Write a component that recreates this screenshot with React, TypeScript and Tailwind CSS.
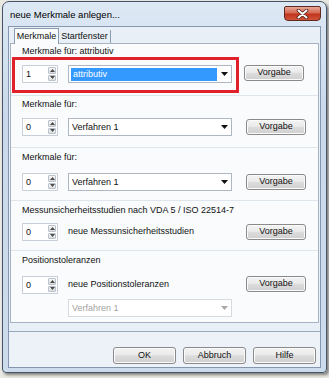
import React from 'react';

// Win7 style "neue Merkmale anlegen..." dialog

const UpArrow = ({ color = '#4a4a4a' }: { color?: string }) => (
  <svg width="5" height="3" viewBox="0 0 5 3">
    <path d="M0 3 L2.5 0 L5 3 Z" fill={color} />
  </svg>
);

const DownArrow = ({ color = '#1a1a1a', w = 7, h = 4 }: { color?: string; w?: number; h?: number }) => (
  <svg width={w} height={h} viewBox="0 0 7 4">
    <path d="M0 0 L7 0 L3.5 4 Z" fill={color} />
  </svg>
);

const Spinner = ({ value }: { value: string }) => (
  <div className="flex h-[18px] w-[36px] border border-[#c8cfd8] bg-white">
    <div className="flex-1 pl-[3px] leading-[16px]">{value}</div>
    <div className="flex w-[9px] flex-col gap-[1px] py-[1px] pr-[1px]">
      <div className="flex flex-1 items-center justify-center rounded-[1px] border border-[#b9c2cc] bg-[linear-gradient(#f7f7f7,#dedede)]">
        <UpArrow />
      </div>
      <div className="flex flex-1 items-center justify-center rounded-[1px] border border-[#b9c2cc] bg-[linear-gradient(#f7f7f7,#dedede)]">
        <DownArrow color="#4a4a4a" w={5} h={3} />
      </div>
    </div>
  </div>
);

const Combo = ({ text, selected, disabled }: { text: string; selected?: boolean; disabled?: boolean }) => (
  <div
    className={
      disabled
        ? 'flex h-[18px] w-[164px] items-center border border-[#d6dbe1] bg-white text-[#a3a3a3]'
        : 'flex h-[18px] w-[164px] items-center border border-[#aeb7c2] bg-white'
    }
  >
    {selected ? (
      <div className="ml-[2px] h-[13px] flex-1 bg-[#3399ff] pl-[2px] leading-[13px] text-white">{text}</div>
    ) : (
      <div className="flex-1 pl-[3px] leading-[16px]">{text}</div>
    )}
    <div className="flex w-[14px] justify-center">
      <DownArrow color={disabled ? '#a9a9a9' : '#111111'} w={7} h={4} />
    </div>
  </div>
);

const Btn = ({ children }: { children: React.ReactNode }) => (
  <div className="flex h-[16px] w-[60px] items-center justify-center rounded-[3px] border border-[#8a8a8a] bg-[linear-gradient(#f3f3f3,#ebebeb_45%,#dcdcdc_52%,#cfcfcf)] shadow-[inset_0_0_0_1px_#fbfbfb]">
    {children}
  </div>
);

const BigBtn = ({ children }: { children: React.ReactNode }) => (
  <div className="flex h-[17px] w-[63px] items-center justify-center rounded-[3px] border border-[#8a8a8a] bg-[linear-gradient(#f3f3f3,#ebebeb_45%,#dcdcdc_52%,#cfcfcf)] shadow-[inset_0_0_0_1px_#fbfbfb]">
    {children}
  </div>
);

function App() {
  return (
    <div className="h-[378px] w-[329px] overflow-hidden bg-[#e9e8e2] font-['Liberation_Sans',Arial,sans-serif] text-[9px] text-[#111111]">
      <div className="ml-[2px] mt-[1px] flex h-[372px] w-[325px] flex-col rounded-t-[7px] rounded-b-[4px] border border-[#46546a] bg-[linear-gradient(#dde8f4,#c9d9eb_30%,#cddcec)] shadow-[2px_2px_3px_rgba(0,0,0,0.45)]">
        {/* title bar */}
        <div className="flex h-[24px] shrink-0 items-start">
          <span className="ml-[7px] mt-[7px] text-[9.5px] leading-[12px] text-black">neue Merkmale anlegen...</span>
          <div className="ml-auto mr-[5px] mt-[4px] flex h-[15px] w-[37px] items-center justify-center rounded-b-[4px] rounded-t-[2px] border border-[#5e2a22] bg-[linear-gradient(#e9a797,#d56a50_45%,#c2341d_55%,#d0553a)]">
            <svg width="13" height="10" viewBox="0 0 13 10">
              <path d="M2.5 1.5 L10.5 8.5 M10.5 1.5 L2.5 8.5" stroke="#4a1f17" strokeWidth="3.6" strokeLinecap="round" />
              <path d="M2.5 1.5 L10.5 8.5 M10.5 1.5 L2.5 8.5" stroke="#ffffff" strokeWidth="2" strokeLinecap="round" />
            </svg>
          </div>
        </div>

        {/* client area */}
        <div className="mx-[5px] mb-[4px] flex flex-1 flex-col border border-[#8497ae] bg-[#e8eff7]">
          {/* tabs */}
          <div className="flex h-[16px] shrink-0 items-end pl-[5px]">
            <div className="relative top-[1px] z-10 flex h-[16px] w-[45px] items-center justify-center border border-b-0 border-[#8c9bb0] bg-[#f9fbfd]">
              Merkmale
            </div>
            <div className="flex h-[13px] w-[52px] items-center justify-center border-r border-[#8c9bb0]">Startfenster</div>
          </div>

          {/* tab page */}
          <div className="mx-[1px] flex h-[280px] shrink-0 flex-col border border-[#a6b3c3] bg-[#f9fbfd]">
            {/* section 1 */}
            <div className="h-[52px] shrink-0 border-b border-[#dfe5ec] pt-[1px]">
              <div className="pl-[11px] leading-[12px]">Merkmale für: attributiv</div>
              <div className="flex items-start pl-[1px]">
                <div className="flex h-[36px] w-[227px] items-start gap-[10px] border-[3px] border-[#e0202b] pl-[7px] pt-[5px]">
                  <Spinner value="1" />
                  <Combo text="attributiv" selected />
                </div>
                <div className="ml-[5px] mt-[8px]">
                  <Btn>Vorgabe</Btn>
                </div>
              </div>
            </div>

            {/* section 2 */}
            <div className="h-[52px] shrink-0 border-b border-[#dfe5ec] pt-[2px]">
              <div className="pl-[11px] leading-[12px]">Merkmale für:</div>
              <div className="mt-[8px] flex items-center pl-[11px]">
                <Spinner value="0" />
                <div className="ml-[10px]">
                  <Combo text="Verfahren 1" />
                </div>
                <div className="ml-[14px]">
                  <Btn>Vorgabe</Btn>
                </div>
              </div>
            </div>

            {/* section 3 */}
            <div className="h-[53px] shrink-0 border-b border-[#dfe5ec] pt-[3px]">
              <div className="pl-[11px] leading-[12px]">Merkmale für:</div>
              <div className="mt-[10px] flex items-center pl-[11px]">
                <Spinner value="0" />
                <div className="ml-[10px]">
                  <Combo text="Verfahren 1" />
                </div>
                <div className="ml-[14px]">
                  <Btn>Vorgabe</Btn>
                </div>
              </div>
            </div>

            {/* section 4 */}
            <div className="h-[50px] shrink-0 border-b border-[#dfe5ec] pt-[3px]">
              <div className="pl-[11px] leading-[12px]">Messunsicherheitsstudien nach VDA 5 / ISO 22514-7</div>
              <div className="mt-[7px] flex items-center pl-[11px]">
                <Spinner value="0" />
                <div className="ml-[10px] w-[164px]">neue Messunsicherheitsstudien</div>
                <div className="ml-[14px]">
                  <Btn>Vorgabe</Btn>
                </div>
              </div>
            </div>

            {/* section 5 */}
            <div className="flex-1 pt-[3px]">
              <div className="pl-[11px] leading-[12px]">Positionstoleranzen</div>
              <div className="mt-[10px] flex items-center pl-[11px]">
                <Spinner value="0" />
                <div className="ml-[10px] w-[164px]">neue Positionstoleranzen</div>
                <div className="ml-[14px] -mt-[3px]">
                  <Btn>Vorgabe</Btn>
                </div>
              </div>
              <div className="mt-[5px] pl-[57px]">
                <Combo text="Verfahren 1" disabled />
              </div>
            </div>
          </div>

          {/* separator + buttons */}
          <div className="mt-[8px] flex flex-1 items-start justify-end gap-[7px] border-t border-[#9aa9bb] bg-[#edf2f8] pr-[4px] pt-[15px]">
            <BigBtn>OK</BigBtn>
            <BigBtn>Abbruch</BigBtn>
            <BigBtn>Hilfe</BigBtn>
          </div>
        </div>
      </div>
    </div>
  );
}

export default App;
